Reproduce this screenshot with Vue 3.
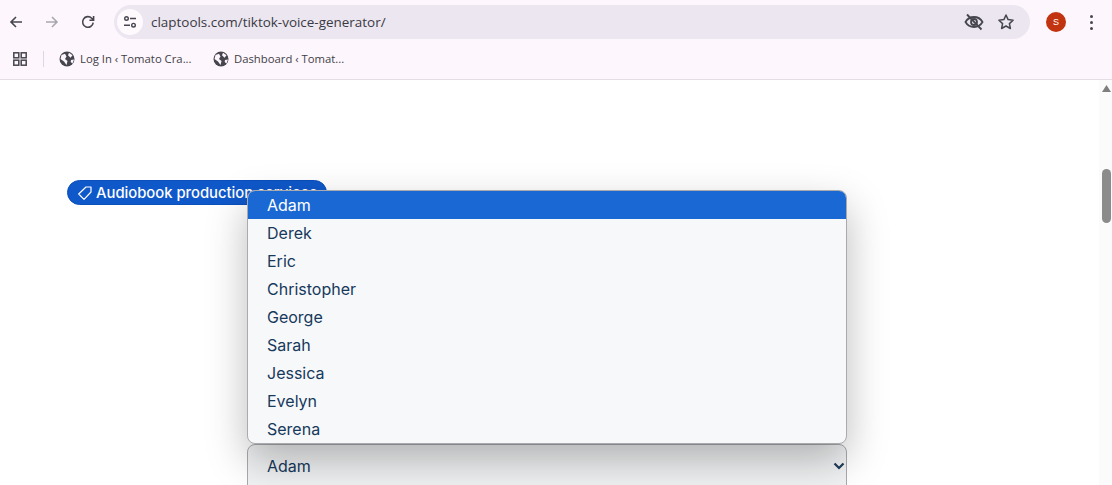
<script setup>
const voices = ['Adam', 'Derek', 'Eric', 'Christopher', 'George', 'Sarah', 'Jessica', 'Evelyn', 'Serena']
const bookmarks = [
  { label: 'Log In ‹ Tomato Cra...', width: '134px' },
  { label: 'Dashboard ‹ Tomat...', width: '130px' }
]
</script>

<template>
  <div class="window">
    <header class="chrome">
      <div class="toolbar">
        <button class="nav">
          <svg width="16" height="16" viewBox="0 0 16 16"><path d="M14 8H3M8 3 3 8l5 5" fill="none" stroke="#47464f" stroke-width="1.6"/></svg>
        </button>
        <button class="nav">
          <svg width="16" height="16" viewBox="0 0 16 16"><path d="M2 8h11M8 3l5 5-5 5" fill="none" stroke="#a9a8b0" stroke-width="1.6"/></svg>
        </button>
        <button class="nav">
          <svg width="16" height="16" viewBox="0 0 16 16"><path d="M13.2 8.6A5.3 5.3 0 1 1 11.7 4.2L13.5 6M13.6 2v4.2H9.4" fill="none" stroke="#47464f" stroke-width="1.6"/></svg>
        </button>
        <div class="omnibox">
          <span class="tune">
            <svg width="16" height="16" viewBox="0 0 16 16" fill="none" stroke="#47464f" stroke-width="1.4">
              <circle cx="4.500" cy="4.500" r="1.800"/><path d="M8 4.500h6M2 11.200h6"/><circle cx="11.500" cy="11.200" r="1.800"/>
            </svg>
          </span>
          <span class="url">claptools.com/tiktok-voice-generator/</span>
          <svg class="eye" width="20" height="20" viewBox="0 0 20 20" fill="none" stroke="#47464f" stroke-width="1.800">
            <path d="M1.500 10C3.500 6.500 6.500 5 10 5s6.500 1.500 8.500 5c-2 3.500-5 5-8.500 5s-6.500-1.500-8.500-5Z"/>
            <circle cx="10" cy="10" r="3"/><path d="M3 2.500l14.500 15"/>
          </svg>
          <svg class="star" width="18" height="18" viewBox="0 0 18 18"><path d="m9 2 2.100 4.600 5 .6-3.700 3.400 1 4.900L9 13l-4.400 2.500 1-4.900L1.900 7.200l5-.6Z" fill="none" stroke="#47464f" stroke-width="1.500" stroke-linejoin="round"/></svg>
        </div>
        <span class="avatar">S</span>
        <span class="menu"><i></i><i></i><i></i></span>
      </div>
      <div class="bookmarks">
        <svg class="apps" width="16" height="16" viewBox="0 0 16 16" fill="none" stroke="#47464f" stroke-width="1.500">
          <rect x="1.800" y="1.800" width="5" height="5"/><rect x="9.200" y="1.800" width="5" height="5"/><rect x="1.800" y="9.200" width="5" height="5"/><rect x="9.200" y="9.200" width="5" height="5"/>
        </svg>
        <span class="divider"></span>
        <span v-for="b in bookmarks" :key="b.label" class="bookmark" :style="{ width: b.width }">
          <svg width="16" height="16" viewBox="0 0 16 16">
            <circle cx="8" cy="8" r="7.500" fill="#47464f"/>
            <path d="M2.500 4 6 2.800 7.500 5.500 6 8l2.500 2-1 4L5 10.500 1.500 8ZM10 1.800l3.500 2.500-2 2.500-2.500-2.500ZM12 9l3-.5-1.500 4-1.800-1.500Z" fill="#fdf6fd"/>
          </svg>
          <span>{{ b.label }}</span>
        </span>
      </div>
    </header>

    <main class="page">
      <div class="content">
        <div class="tag">
          <svg width="16" height="16" viewBox="0 0 16 16"><path d="M9 2h5v5l-7 7.300L1.700 9Z" fill="none" stroke="#fff" stroke-width="1.200" stroke-linejoin="round"/></svg>
          <span>Audiobook production services</span>
        </div>
        <div class="select-zone">
          <ul class="dropdown">
            <li v-for="(v, i) in voices" :key="v" :class="{ active: i === 0 }">{{ v }}</li>
          </ul>
          <div class="select">
            <span>Adam</span>
            <svg width="12" height="8" viewBox="0 0 12 8"><path d="m1.500 1.500 4.500 4.500 4.500-4.500" fill="none" stroke="#1d3b5a" stroke-width="2.200"/></svg>
          </div>
        </div>
      </div>
      <aside class="scrollbar">
        <svg class="up" width="9" height="7" viewBox="0 0 9 7"><path d="M4.500 0l4.500 7H0Z" fill="#7f7f7f"/></svg>
        <span class="thumb"></span>
      </aside>
    </main>
  </div>
</template>

<style>
html, body { margin: 0; background: #fff; overflow: hidden; }
</style>

<style scoped>
.window {
  width: 1112px;
  height: 485px;
  display: flex;
  flex-direction: column;
  overflow: hidden;
  font-family: "Open Sans", "Liberation Sans", Arial, sans-serif;
}
.chrome {
  height: 80px;
  box-sizing: border-box;
  flex: none;
  background: #fdf6fd;
  border-bottom: 1px solid #e4dfe6;
  display: flex;
  flex-direction: column;
}
.toolbar {
  height: 44px;
  flex: none;
  display: flex;
  align-items: center;
  margin-left: -2px;
}
.nav {
  width: 36px;
  height: 28px;
  padding: 0;
  display: flex;
  align-items: center;
  justify-content: center;
  background: none;
  border: 0;
}
.omnibox {
  margin-left: 8px;
  width: 916px;
  height: 34px;
  box-sizing: border-box;
  border-radius: 17px;
  background: #ebe6f0;
  display: flex;
  align-items: center;
  padding: 0 15px 0 3px;
}
.tune {
  width: 26px;
  height: 26px;
  border-radius: 50%;
  background: #fdf9fd;
  display: flex;
  align-items: center;
  justify-content: center;
}
.url {
  margin-left: 8px;
  font-size: 13.450px;
  color: #3a3942;
  flex: 1;
}
.eye { margin-right: 13px; flex: none; }
.star { flex: none; }
.avatar {
  margin-left: 16px;
  width: 20px;
  height: 20px;
  border-radius: 50%;
  background: #c2340f;
  color: #fff;
  font: 9px/20px "Liberation Sans", Arial, sans-serif;
  text-align: center;
}
.menu {
  margin-left: 24px;
  display: flex;
  flex-direction: column;
  gap: 3px;
}
.menu i {
  display: block;
  width: 3px;
  height: 3px;
  border-radius: 50%;
  background: #47464f;
}
.bookmarks {
  height: 35px;
  display: flex;
  align-items: center;
  padding-left: 12px;
  padding-bottom: 6px;
  box-sizing: border-box;
}
.apps { flex: none; }
.divider {
  width: 1px;
  height: 16px;
  background: #dcd7e2;
  margin: 0 15px 0 15px;
}
.bookmark {
  display: flex;
  align-items: center;
  gap: 5px;
  font-size: 11.300px;
  color: #3f3e46;
  white-space: nowrap;
  margin-right: 20px;
  flex: none;
}
.bookmark svg { flex: none; }
.page {
  flex: 1;
  display: flex;
  position: relative;
  min-height: 0;
  background: #fff;
}
.content {
  flex: 1;
  position: relative;
  min-width: 0;
  font-family: Inter, "Liberation Sans", sans-serif;
}
.tag {
  position: absolute;
  left: 67px;
  top: 100px;
  height: 25px;
  width: 260px;
  box-sizing: border-box;
  padding-left: 9px;
  border-radius: 13px;
  border: 1px solid #0b4fbb;
  background: #0f58ca;
  color: #fff;
  font-size: 14.800px;
  font-weight: 500;
  display: flex;
  align-items: center;
  gap: 3px;
  white-space: nowrap;
  overflow: hidden;
}
.tag svg { flex: none; }
.select-zone {
  position: absolute;
  left: 247px;
  top: 110px;
  width: 600px;
}
.dropdown {
  list-style: none;
  margin: 0;
  padding: 0;
  height: 254px;
  overflow: hidden;
  box-sizing: border-box;
  border: 1px solid #a8aaad;
  border-radius: 8px;
  background: #f6f8fa;
  color: #17395c;
  font-size: 16px;
  box-shadow: 0 16px 40px rgba(0, 0, 0, .27);
  position: relative;
  z-index: 1;
}
.dropdown li {
  height: 28px;
  line-height: 28px;
  padding-left: 19px;
}
.dropdown li.active {
  background: #1a68d4;
  color: #fff;
}
.select {
  height: 60px;
  box-sizing: border-box;
  border: 1px solid #a8aaad;
  border-radius: 8px;
  background: #f1f2f3;
  color: #17395c;
  font-size: 16px;
  display: flex;
  justify-content: space-between;
  padding: 11px 1px 0 19px;
}
.select svg { margin-top: 6px; }
.scrollbar {
  width: 13px;
  box-sizing: border-box;
  padding-left: 2px;
  flex: none;
  background: #fbfbfb;
  position: relative;
  display: flex;
  flex-direction: column;
  align-items: center;
}
.up { margin-top: 5px; flex: none; }
.thumb {
  width: 9px;
  height: 54px;
  margin-top: 77px;
  border-radius: 5px;
  background: #8b8b8b;
}
</style>
